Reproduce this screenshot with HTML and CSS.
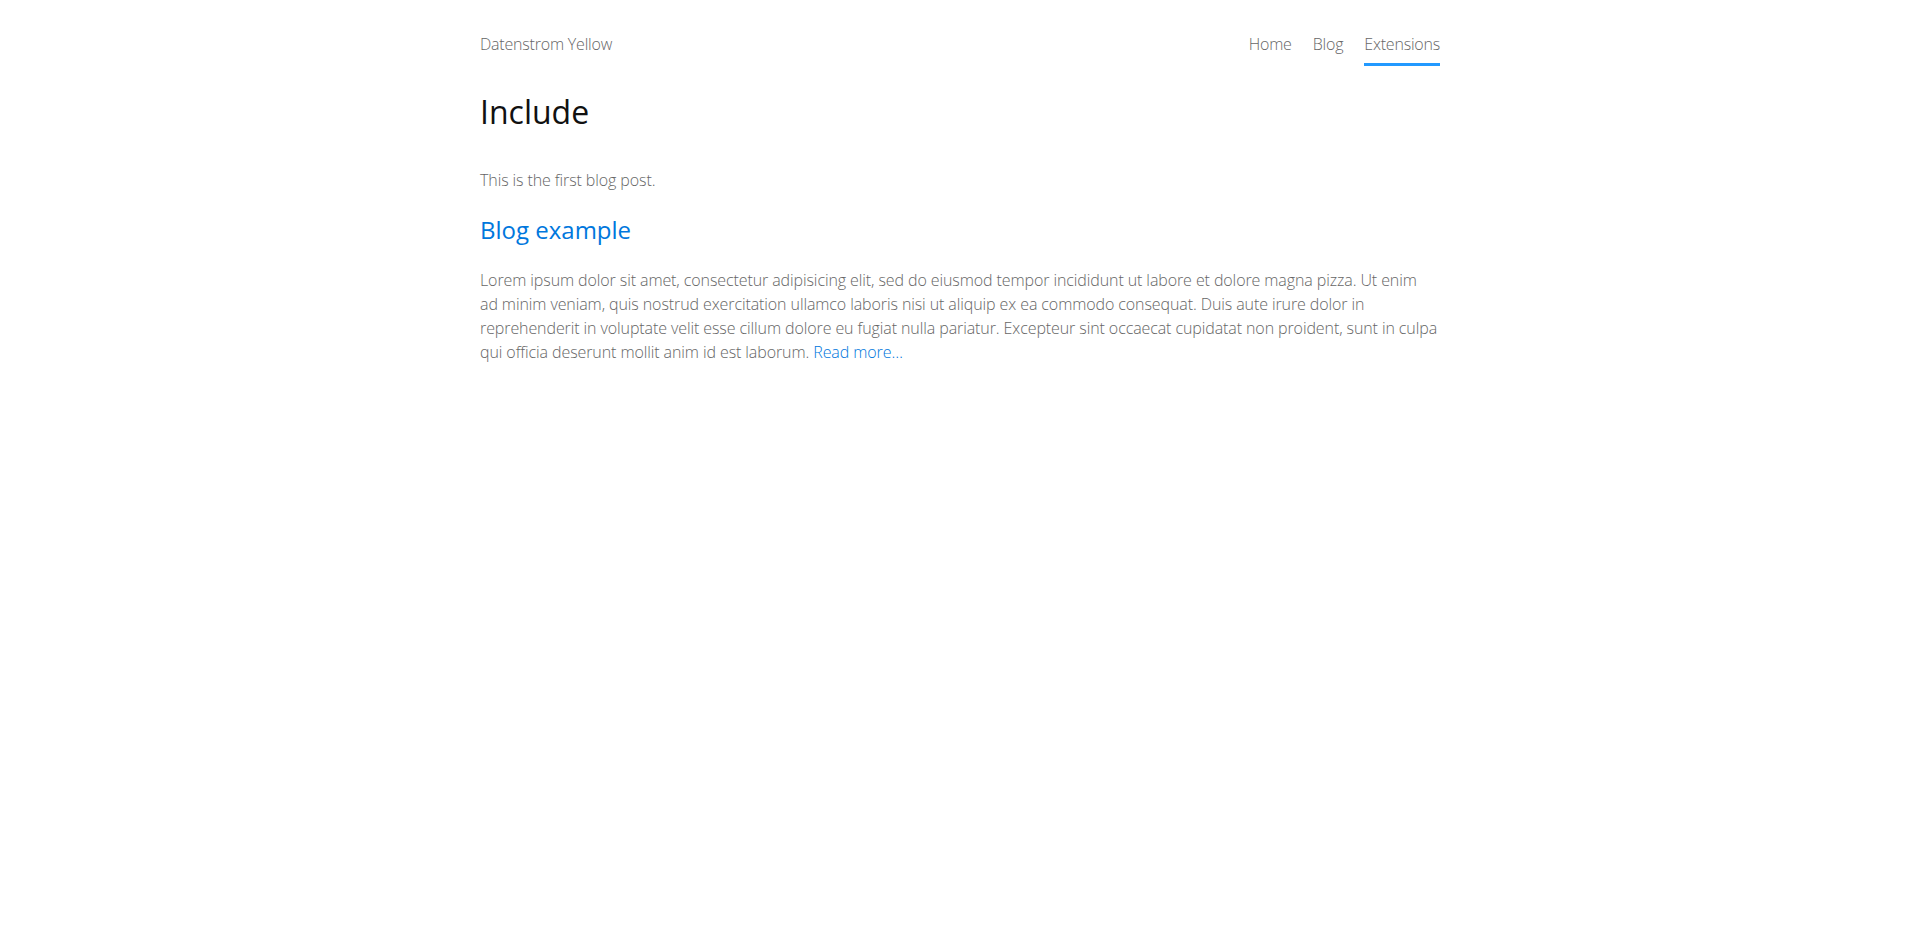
FILE: index.html
```html
<!DOCTYPE html>
<html lang="en">
<head>
<meta charset="utf-8">
<title>Include - Datenstrom Yellow</title>
<link rel="stylesheet" href="styles.css">
</head>
<body>
<div class="page">
  <header class="header">
    <a class="sitename" href="#">Datenstrom Yellow</a>
    <nav class="navigation">
      <a href="#">Home</a>
      <a href="#">Blog</a>
      <a class="active" href="#">Extensions</a>
    </nav>
  </header>
  <main class="content">
    <h1 class="title">Include</h1>
    <p class="intro">This is the first blog post.</p>
    <h2 class="post-title"><a href="#">Blog example</a></h2>
    <p class="post-text">Lorem ipsum dolor sit amet, consectetur adipisicing elit, sed do eiusmod tempor incididunt ut labore et dolore magna pizza. Ut enim ad&nbsp;minim veniam, quis nostrud exercitation ullamco laboris nisi ut aliquip ex ea commodo consequat. Duis aute irure dolor in reprehenderit in voluptate velit esse cillum dolore eu fugiat nulla pariatur. Excepteur sint occaecat cupidatat non proident, sunt in culpa qui officia deserunt mollit anim id est laborum. <a href="#">Read more…</a></p>
  </main>
</div>
</body>
</html>
```

FILE: styles.css
```css
html, body {
  margin: 0;
  padding: 0;
  background: #fff;
}
body {
  color: #666;
  font-family: "Open Sans", "Liberation Sans", sans-serif;
  font-size: 16px;
  font-weight: 300;
  line-height: 1.5;
}
a {
  color: #07d;
  text-decoration: none;
}
.page {
  width: 960px;
  margin: 0 auto;
}
.header {
  display: flex;
  justify-content: space-between;
  align-items: flex-start;
  padding-top: 32px;
  letter-spacing: -0.2px;
}
.sitename {
  color: #666;
}
.navigation {
  display: flex;
  gap: 21px;
}
.navigation a {
  color: #666;
  padding-bottom: 7px;
  border-bottom: 3px solid transparent;
}
.navigation a.active {
  border-bottom-color: #29f;
}
.title {
  margin: 22px 0 0;
  color: #111;
  font-size: 32px;
  font-weight: 400;
  line-height: 48px;
}
.intro {
  margin: 32px 0 0;
  letter-spacing: -0.1px;
}
.post-title {
  margin: 20px 0 0;
  font-size: 24px;
  font-weight: 400;
  line-height: 36px;
}
.post-text {
  margin: 20px 0 0;
  letter-spacing: -0.095px;
}
```
